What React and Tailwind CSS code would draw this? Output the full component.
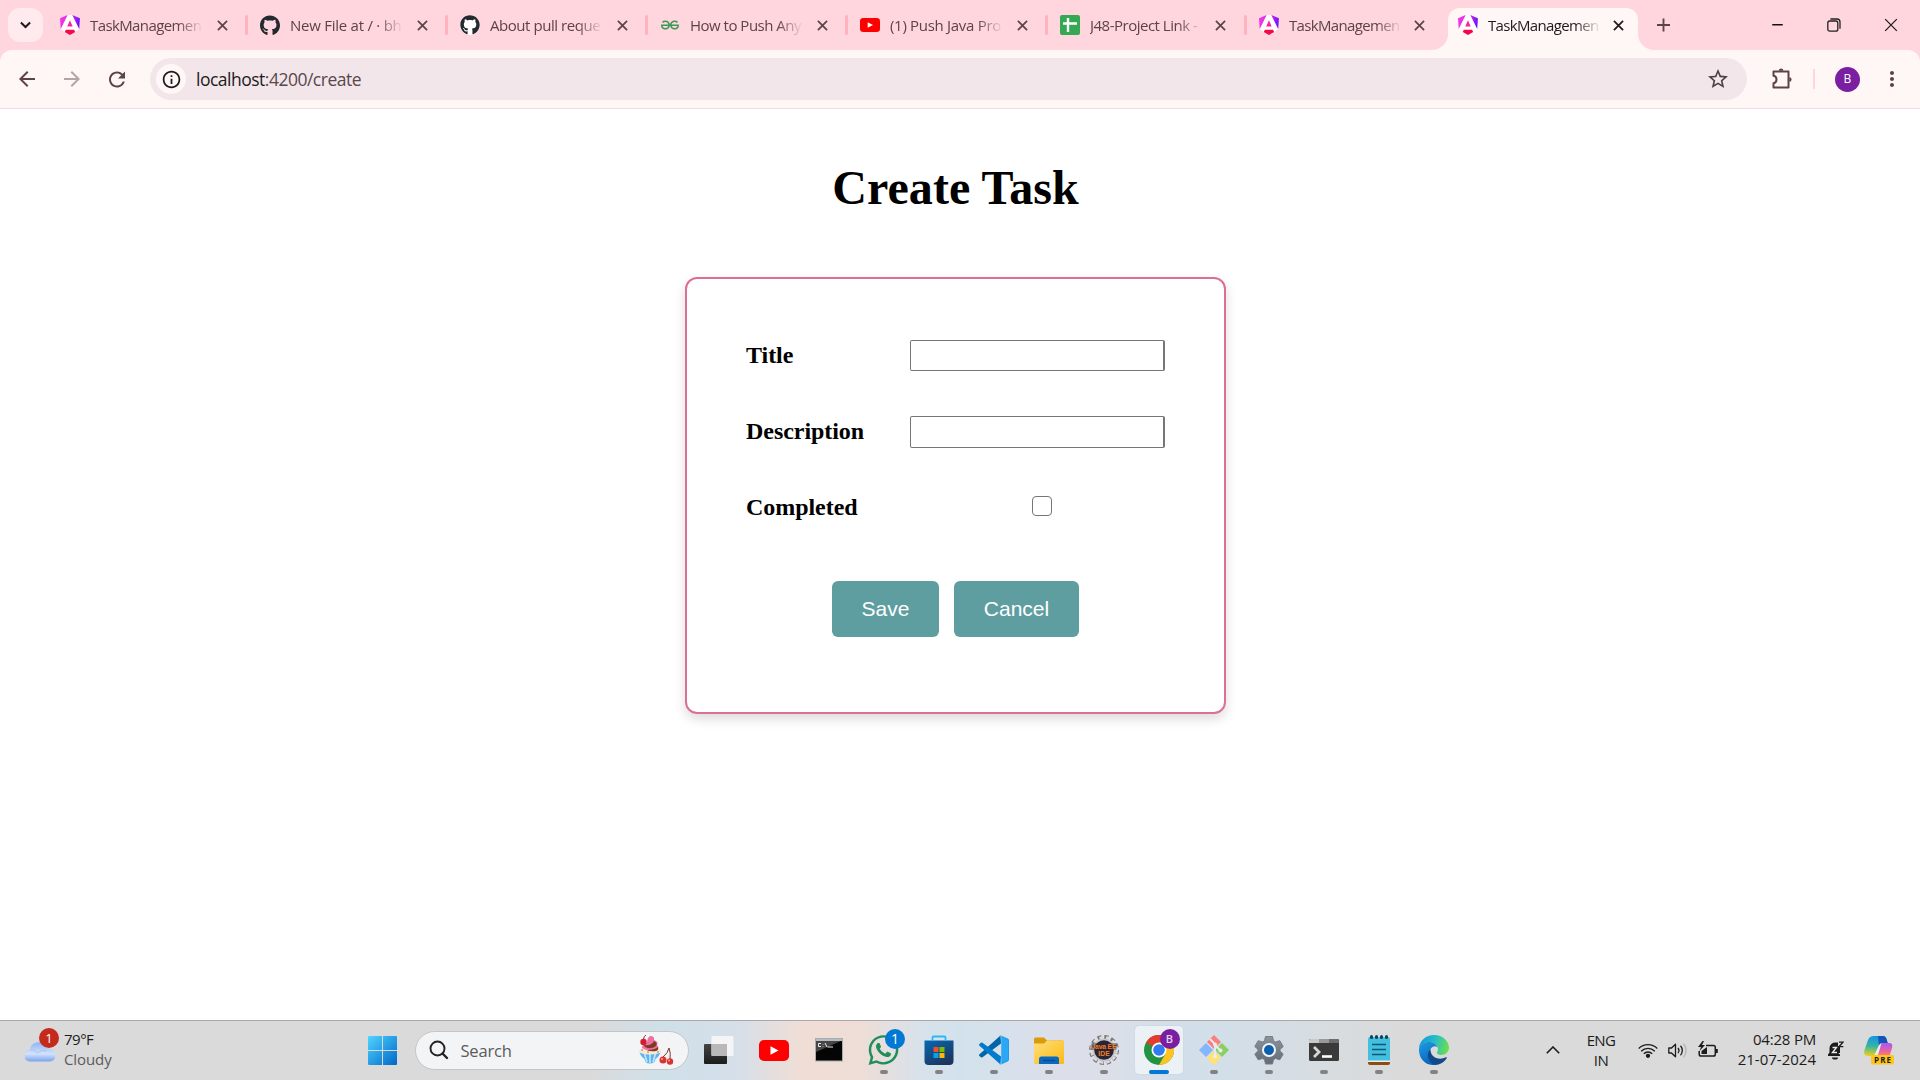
import React from "react";
import { MdArrowBack, MdArrowForward, MdRefresh, MdStarBorder, MdInfoOutline, MdMoreVert } from "react-icons/md";
import { FaGithub, FaWhatsapp } from "react-icons/fa";
import { SiGeeksforgeeks } from "react-icons/si";

function AngularIcon() {
  return (
    <svg viewBox="0 0 223 236" className="h-5 w-5" preserveAspectRatio="none">
      <defs>
        <linearGradient id="angA" x1="0" y1="0.3" x2="1" y2="0.5">
          <stop offset="0" stopColor="#f637e3" />
          <stop offset="0.5" stopColor="#d22bf0" />
          <stop offset="1" stopColor="#6c12fb" />
        </linearGradient>
        <linearGradient id="angB" x1="0" y1="0" x2="1" y2="1">
          <stop offset="0" stopColor="#fb0a3c" />
          <stop offset="1" stopColor="#e90464" />
        </linearGradient>
      </defs>
      <path fill="#fff" d="M84.690 0H137.387L214 165 168.972 202 H53.100L8 165z" />
      <path fill="url(#angA)" d="m222.077 39.192-8.019 125.923L137.387 0l84.69 39.192ZM7.937 165.115 0 39.192 84.69 0 7.937 165.115Z" />
      <path fill="#f0289f" d="M111.039 62.675l30.357 73.803H80.681l30.358-73.803Z" />
      <path fill="url(#angB)" d="m168.972 202.017-57.933 33.056-57.934-33.056 11.783-28.556h92.301l11.783 28.556Z" />
    </svg>
  );
}

function YouTubeIcon({ className }) {
  return (
    <svg viewBox="0 0 30 22" className={className} preserveAspectRatio="none">
      <rect width="30" height="22" rx="5" fill="#f00" />
      <path d="M11.5 6.5v9l8-4.5z" fill="#fff" />
    </svg>
  );
}

function SheetIcon() {
  return (
    <svg viewBox="0 0 20 20" className="h-5 w-5">
      <rect width="20" height="20" rx="2" fill="#34a853" />
      <path d="M8 3v14M3 8.5h14" stroke="#fff" strokeWidth="2.4" />
    </svg>
  );
}

function Cross({ className, width = 1.9 }) {
  return (
    <svg viewBox="0 0 12 12" className={className} fill="none" stroke="currentColor" strokeWidth={width}>
      <path d="M1 1l10 10M11 1L1 11" />
    </svg>
  );
}

const tabs = [
  { title: "TaskManagemen", icon: <AngularIcon />, tracking: "tracking-[-0.600px]" },
  { title: "New File at / · bh", icon: <FaGithub className="h-[21px] w-5 text-[#24292f]" />, tracking: "tracking-[-0.250px]" },
  {
    title: "About pull reque",
    tracking: "tracking-[-0.450px]",
    icon: (
      <span className="flex h-5 w-5 items-center justify-center rounded-full bg-white">
        <FaGithub className="h-5 w-5 text-[#24292f]" />
      </span>
    ),
  },
  { title: "How to Push Any", icon: <SiGeeksforgeeks className="h-[18px] w-[18px] text-[#3c9a55]" />, tracking: "tracking-[-0.500px]" },
  { title: "(1) Push Java Pro", icon: <YouTubeIcon className="h-[14px] w-5" />, tracking: "tracking-[-0.300px]" },
  { title: "J48-Project Link -", icon: <SheetIcon />, narrow: true, tracking: "tracking-[-0.500px]" },
  { title: "TaskManagemen", icon: <AngularIcon />, narrow: true, tracking: "tracking-[-0.650px]" },
  { title: "TaskManagemen", icon: <AngularIcon />, active: true, tracking: "tracking-[-0.650px]" },
];

function Tab({ tab, divider }) {
  return (
    <div
      className={
        tab.active
          ? "relative flex h-[42px] w-[190px] shrink-0 items-center rounded-t-xl bg-[#fff7f5] pb-2 pl-2.5 text-[#1f1a1b]"
          : tab.narrow
            ? "flex h-[42px] w-[199px] shrink-0 items-center pb-2 pl-2.5 text-[#5c4347]"
            : "flex h-[42px] w-[200px] shrink-0 items-center pb-2 pl-2.5 text-[#5c4347]"
      }
    >
      {tab.active && (
        <>
          <svg className="absolute -left-4 bottom-0 h-4 w-4" viewBox="0 0 16 16">
            <path d="M16 0v16H0A16 16 0 0 0 16 0z" fill="#fff7f5" />
          </svg>
          <svg className="absolute -right-4 bottom-0 h-4 w-4" viewBox="0 0 16 16">
            <path d="M0 0v16h16A16 16 0 0 1 0 0z" fill="#fff7f5" />
          </svg>
        </>
      )}
      <span className="flex w-5 shrink-0 justify-center">{tab.icon}</span>
      <span
        className={
          "ml-2.5 w-[112px] shrink-0 overflow-hidden whitespace-nowrap text-[15px] leading-5 [mask-image:linear-gradient(to_right,black_78%,transparent_101%)] " +
          tab.tracking
        }
      >
        {tab.title}
      </span>
      <Cross className={tab.active || tab.narrow ? "ml-[13px] h-[11px] w-[11px] shrink-0" : "ml-[14.500px] h-[11px] w-[11px] shrink-0"} />
      {divider && <span className="ml-auto mr-0.5 h-5 w-[3px] rounded-full bg-[#ffb3c0]" />}
    </div>
  );
}

function BrowserChrome() {
  return (
    <header className="bg-[#ffd6de] font-['Open_Sans','Noto_Sans',sans-serif]">
      <div className="flex h-[50px] items-start pt-2">
        <button className="ml-2 mr-[7px] flex h-[34px] w-[35px] shrink-0 items-center justify-center rounded-xl bg-[#ffebee]">
          <svg viewBox="0 0 12 8" className="h-2 w-[11px]" fill="none" stroke="#1f1a1b" strokeWidth="2.2">
            <path d="M1 1.2l5 5 5-5" />
          </svg>
        </button>
        {tabs.map((t, i) => (
          <Tab key={i} tab={t} divider={i < 6} />
        ))}
        <svg viewBox="0 0 14 14" className="ml-[19px] mt-2.5 h-[14px] w-[13px] shrink-0" stroke="#5c4347" strokeWidth="2">
          <path d="M7 0v14M0 7h14" />
        </svg>
        <div className="ml-auto mr-[22px] flex h-[34px] items-center text-[#1f1a1b]">
          <svg viewBox="0 0 14 2" className="h-[1.5px] w-[13px]">
            <rect width="14" height="2" fill="#111" />
          </svg>
          <svg viewBox="0 0 14 14" className="ml-[43px] h-[14px] w-[14px]" fill="none" stroke="#222" strokeWidth="1.3">
            <rect x="0.8" y="3" width="10" height="10.2" rx="2" />
            <path d="M3.4 1h6.6a3 3 0 0 1 3 3v6.8" />
          </svg>
          <Cross className="ml-[43px] h-[14px] w-[14px]" width={1.1} />
        </div>
      </div>
      <div className="flex h-[58px] items-center rounded-t-xl bg-[#fff7f5] text-[#5c4347]">
        <MdArrowBack className="ml-[15px] h-6 w-6 text-[#5c4347]" />
        <MdArrowForward className="ml-[21px] h-6 w-6 text-[#b3a5a6]" />
        <MdRefresh className="ml-[21px] h-[25px] w-6" />
        <div className="ml-[21px] flex h-[42px] w-[1597px] items-center rounded-full bg-[#f2e6ea] pl-[6px]">
          <span className="flex h-[30px] w-[30px] items-center justify-center rounded-full bg-[#fff7f5]">
            <MdInfoOutline className="h-[21px] w-[21px] text-[#1f1a1b]" />
          </span>
          <span className="ml-2.5 text-[17.500px] tracking-[-0.500px] text-[#5a474b]">
            <span className="text-[#1f1a1b]">localhost</span>:4200/create
          </span>
          <MdStarBorder className="ml-auto mr-[17px] h-6 w-6 text-[#4f3e41]" />
        </div>
        <svg viewBox="0 0 24 24" className="ml-[23px] h-6 w-6" fill="none" stroke="#5c4347" strokeWidth="2">
          <path d="M3.500 4.500H18.500V20.500H3.500V16.200C7.500 15.500 7.500 9.500 3.500 8.800z" strokeLinejoin="round" />
          <path d="M8.800 3.800a2.300 2.300 0 0 1 4.600 0zM19.300 10.200a2.300 2.300 0 0 1 0 4.600z" fill="#5c4347" stroke="none" />
        </svg>
        <span className="ml-[19px] h-5 w-0.5 bg-[#ffd6de]" />
        <span className="ml-5 flex h-[25px] w-[25px] items-center justify-center rounded-full bg-[#7b1fa2] text-[12px] text-white">B</span>
        <MdMoreVert className="ml-5 h-6 w-6" />
      </div>
    </header>
  );
}

function Field({ label, children }) {
  return (
    <div className="flex h-[76px] items-start">
      <label className="w-[164px] pt-px text-[24px] font-bold leading-7 tracking-[-0.050px]">{label}</label>
      {children}
    </div>
  );
}

function CreateTask() {
  return (
    <main className="flex flex-1 flex-col items-center border-t border-[#f3dade] bg-white pr-[9px] font-['Liberation_Serif',serif] text-black">
      <h1 className="mt-[51px] text-[48px] font-bold leading-[56px] tracking-[0.050px]">Create Task</h1>
      <form className="mt-[61px] h-[437px] w-[541px] rounded-xl border-[2.500px] border-[#db7093] px-[59px] pt-[61px] shadow-[0_5px_12px_rgba(0,0,0,0.14)]">
        <Field label="Title">
          <input className="h-[31px] w-[255px] shrink-0 rounded-[2px] border border-r-2 border-[#767676] bg-white" />
        </Field>
        <Field label="Description">
          <input className="h-8 w-[255px] shrink-0 rounded-[2px] border border-r-2 border-[#767676] bg-white" />
        </Field>
        <Field label="Completed">
          <input
            type="checkbox"
            className="ml-[122px] mt-[4px] h-5 w-5 appearance-none rounded-[4px] border-[1.500px] border-[#767676] bg-white"
          />
        </Field>
        <div className="mt-[13px] flex justify-center gap-[15px] font-['Liberation_Sans',sans-serif] text-[21px] text-white">
          <button type="button" className="h-14 w-[107px] rounded-md bg-[#5f9ea0]">Save</button>
          <button type="button" className="h-14 w-[125px] rounded-md bg-[#5f9ea0]">Cancel</button>
        </div>
      </form>
    </main>
  );
}

const WindowsIcon = () => (
  <svg viewBox="0 0 29 29" className="h-[29px] w-[29px]">
    <defs>
      <linearGradient id="win" x1="0" y1="0" x2="29" y2="29" gradientUnits="userSpaceOnUse">
        <stop offset="0" stopColor="#4fd5ff" />
        <stop offset="1" stopColor="#0067c8" />
      </linearGradient>
    </defs>
    <path fill="url(#win)" d="M1 0h13v14H0V1a1 1 0 0 1 1-1zM15 0h13a1 1 0 0 1 1 1v13H15zM0 15h14v14H1a1 1 0 0 1-1-1zM15 15h14v13a1 1 0 0 1-1 1H15z" />
  </svg>
);

const SundaeIcon = () => (
  <svg viewBox="0 0 36 30" className="h-[30px] w-9">
    <path d="M1.500 15q0 6 5 9l1 3q4 3 9 0l1-3q5-3 5-9z" fill="#5fb4ee" />
    <path d="M6 17l3 10M12 17v11M18 17l-3 10" stroke="#c3e7fd" strokeWidth="1.600" />
    <ellipse cx="12" cy="16" rx="11.500" ry="3.600" fill="#f8ead0" />
    <path d="M3 15h2M9 17h2M14 15.500h2M19 17h2" stroke="#d95c77" strokeWidth="1" />
    <path d="M4 13q0-4 5-5 0-5 3-7 5 0 4 4 5 2 3 5 3 3-1 5-8 2-14-2z" fill="#ef6fa2" />
    <path d="M6 10q8 1 10-4 4 2 2 5-5 4-11 1zM9 15q8 0 11-3 1 3-2 4-5 1-9-1z" fill="#7b3b23" />
    <circle cx="5.500" cy="7" r="3.200" fill="#d41e2f" />
    <path d="M5.500 4Q6 1 8 0M25 22q5-4 6-9 2 5 1 11" stroke="#7a3a28" fill="none" />
    <circle cx="25" cy="25" r="3.500" fill="#d9352f" />
    <circle cx="32" cy="26.500" r="3.200" fill="#d9352f" />
    <circle cx="24" cy="24" r="1" fill="#ff9a8c" />
    <circle cx="31" cy="25.500" r="1" fill="#ff9a8c" />
  </svg>
);

const TaskViewIcon = () => (
  <svg viewBox="0 0 30 29" className="h-[29px] w-[30px]">
    <defs>
      <linearGradient id="tv" x1="0" y1="0" x2="0" y2="1"><stop stopColor="#444" /><stop offset="1" stopColor="#1c1c1c" /></linearGradient>
    </defs>
    <rect y="8" width="23" height="20" rx="1" fill="url(#tv)" />
    <rect x="7.500" width="22" height="20" rx="1" fill="#f5f5f5" />
    <path d="M7.500 8H23v12H8.500a1 1 0 0 1-1-1z" fill="#b9b9b9" />
  </svg>
);

const CmdIcon = () => (
  <svg viewBox="0 0 28 24" className="h-6 w-7">
    <rect x="0.500" y="0.500" width="27" height="22.500" fill="#050505" stroke="#a8abb0" />
    <path d="M1 1h26v2H1z" fill="#b6bcc4" />
    <path d="M1 3h25L1 14z" fill="#454545" />
    <path d="M6 5.500H3.500v3H6M8 6v.5M8 8v.5M10 5l2 4M12.500 9H18" stroke="#eee" strokeWidth="1" fill="none" />
  </svg>
);

const StoreIcon = () => (
  <svg viewBox="0 0 30 30" className="h-[30px] w-[30px]">
    <defs>
      <linearGradient id="store" x1="0" y1="0" x2="0.600" y2="1"><stop stopColor="#0768b4" /><stop offset="1" stopColor="#1c365f" /></linearGradient>
    </defs>
    <path d="M.5 5.500h29V26a4 4 0 0 1-4 4h-21a4 4 0 0 1-4-4z" fill="url(#store)" />
    <path d="M8.500 6V2.500a1 1 0 0 1 1-1h11a1 1 0 0 1 1 1V6" fill="none" stroke="#29b9f2" strokeWidth="1.800" />
    <path d="M9.500 12h5v5h-5z" fill="#f25022" /><path d="M15.500 12h5v5h-5z" fill="#7fba00" />
    <path d="M9.500 18h5v5h-5z" fill="#00a4ef" /><path d="M15.500 18h5v5h-5z" fill="#ffb900" />
  </svg>
);

const CodeIcon = () => (
  <svg viewBox="0 0 30 30" className="h-[30px] w-[30px]">
    <path d="M22 8.500L3.500 22.300a1.300 1.300 0 0 1-1.600 0L.5 21a1.200 1.200 0 0 1 0-1.800L21.500.5z" fill="#0065a9" />
    <path d="M22 21.500L3.500 7.700a1.300 1.300 0 0 0-1.600 0L.5 9a1.200 1.200 0 0 0 0 1.800l21 18.700z" fill="#007acc" />
    <path d="M21.500 29.800a1.900 1.900 0 0 1-1.400-.5c1 .8 2.400.2 2.400-1.200V1.900c0-1.300-1.500-2-2.400-1.100.4-.5 1-.6 1.600-.4l7 3.200c.8.4 1.300 1 1.300 1.900v19c0 .8-.5 1.600-1.300 1.900z" fill="#1f9cf0" />
    <path d="M22.500 2v26l6.500-3V5z" fill="#2aa7f5" />
  </svg>
);

const FolderIcon = () => (
  <svg viewBox="0 0 30 27" className="h-[27px] w-[30px]">
    <defs>
      <linearGradient id="fold" x1="0" y1="0" x2="1" y2="1"><stop stopColor="#ffe07a" /><stop offset="1" stopColor="#fbb914" /></linearGradient>
    </defs>
    <path d="M0 2a1.500 1.500 0 0 1 1.500-1.500h8.500l3 3h15.500A1.500 1.500 0 0 1 30 5v8H0z" fill="#dc9a0b" />
    <path d="M0 6.500h10l3-3h15.500A1.500 1.500 0 0 1 30 5v21a1 1 0 0 1-1 1H1a1 1 0 0 1-1-1z" fill="url(#fold)" />
    <path d="M5 27v-5a2.500 2.500 0 0 1 2.500-2.500h15A2.500 2.500 0 0 1 25 22v5z" fill="#0c68c0" />
    <path d="M9 23.500h12" stroke="#0a4f93" strokeWidth="1.500" />
  </svg>
);

const JavaIcon = () => (
  <svg viewBox="0 0 30 30" className="h-[30px] w-[30px]">
    <circle cx="15" cy="15" r="13" fill="none" stroke="#74777b" strokeWidth="4" strokeDasharray="4 2.800" />
    <circle cx="15" cy="15" r="12.600" fill="none" stroke="#dcdcdc" strokeWidth="2.600" strokeDasharray="3.600 3.200" />
    <circle cx="15" cy="15" r="11.500" fill="#c9c9c9" />
    <circle cx="15" cy="15" r="9.800" fill="#2b2438" />
    <path d="M2.500 8.500h25v6h-25z" fill="#2b2438" opacity="0.700" />
    <g fill="#f08020" fontFamily="Liberation Sans" fontSize="6.800" fontWeight="bold" textAnchor="middle">
      <text x="15" y="14" textLength="25">Java EE</text>
      <text x="15" y="20.500">IDE</text>
    </g>
  </svg>
);

const ChromeIcon = () => (
  <svg viewBox="0 0 30 30" className="h-[30px] w-[30px]">
    <circle cx="15" cy="15" r="15" fill="#229342" />
    <path d="M15 15L2 7.500A15 15 0 0 1 28 7.500H15z" fill="#e33b2e" />
    <path d="M21.500 18.800L15 30a15 15 0 0 0 13-22.500H15z" fill="#fdc31e" />
    <circle cx="15" cy="15" r="7.500" fill="#fff" />
    <circle cx="15" cy="15" r="5.800" fill="#2f7cf0" />
  </svg>
);

const GitIcon = () => (
  <svg viewBox="0 0 30 30" className="h-[30px] w-[30px]">
    <path d="M15 0l7 7-7 7-7-7z" fill="#f98080" />
    <path d="M23 8l7 7-7 7-7-7z" fill="#8bd05f" />
    <path d="M7 8l7 7-7 7-7-7z" fill="#84b5ff" />
    <path d="M15 16l7 7-7 7-7-7z" fill="#ffe26f" />
    <path d="M11 4l5 5v13M16 10l6 6" fill="none" stroke="#e8edf0" strokeWidth="1.800" />
    <circle cx="16" cy="9.500" r="2" fill="#e8edf0" /><circle cx="21.500" cy="15.500" r="2" fill="#e8edf0" /><circle cx="16" cy="21.500" r="2" fill="#e8edf0" />
  </svg>
);

const SettingsIcon = () => (
  <svg viewBox="0 0 30 30" className="h-[30px] w-[30px]">
    <defs>
      <linearGradient id="gear" x1="0" y1="0" x2="0" y2="1"><stop stopColor="#8b949c" /><stop offset="1" stopColor="#626b74" /></linearGradient>
    </defs>
    <g fill="url(#gear)" stroke="#757e87" strokeLinejoin="round" strokeWidth="1">
      <path d="M11.500 1.500h7l1 4.300 2 1.200 4.300-1.300 3.400 5.800-3.200 3v1.500l3.200 3-3.400 5.800-4.300-1.300-2 1.200-1 4.300h-7l-1-4.300-2-1.200-4.300 1.300L.8 19l3.200-3v-1.500l-3.200-3 3.400-5.800L8.500 7l2-1.200z" />
    </g>
    <circle cx="15" cy="15" r="7" fill="#f2f5f7" />
    <circle cx="15" cy="15" r="5" fill="#0d5fae" />
  </svg>
);

const TerminalIcon = () => (
  <svg viewBox="0 0 30 22" className="h-[22px] w-[30px]">
    <rect width="30" height="22" rx="1.500" fill="#3a3a3a" />
    <path d="M1.500 0H10v4H0V1.500A1.500 1.500 0 0 1 1.500 0z" fill="#c9c9c9" />
    <path d="M10 0h10v4H10z" fill="#999" /><path d="M20 0h8.500A1.500 1.500 0 0 1 30 1.500V4H20z" fill="#6c6c6c" />
    <path d="M5 8l5 5-5 5" fill="none" stroke="#d6d6d6" strokeWidth="2.800" />
    <path d="M13 17.500h10" stroke="#fff" strokeWidth="2.600" />
  </svg>
);

const NotepadIcon = () => (
  <svg viewBox="0 0 22 30" className="h-[30px] w-[22px]">
    <path d="M0 24h22v4a2 2 0 0 1-2 2H2a2 2 0 0 1-2-2z" fill="#8e4b12" />
    <path d="M0 4a2 2 0 0 1 2-2h18a2 2 0 0 1 2 2v22H0z" fill="#43bfdf" />
    <path d="M0 25.500h22v1.500H0z" fill="#eee" />
    <path d="M4 9.500h14M4 14.500h14M4 19.500h14" stroke="#0e5774" strokeWidth="1.600" />
    <g fill="#123f57">
      <rect x="2" width="3" height="4" rx="1.500" /><rect x="7" width="3" height="4" rx="1.500" />
      <rect x="12" width="3" height="4" rx="1.500" /><rect x="17" width="3" height="4" rx="1.500" />
    </g>
  </svg>
);

const EdgeIcon = () => (
  <svg viewBox="0 0 30 30" className="h-[30px] w-[30px]">
    <defs>
      <linearGradient id="edgeTop" x1="0" y1="0.300" x2="1" y2="0.500">
        <stop stopColor="#1596dc" /><stop offset="0.500" stopColor="#24bdc9" /><stop offset="1" stopColor="#6be04a" />
      </linearGradient>
      <linearGradient id="edgeLeft" x1="0" y1="0" x2="0.500" y2="1"><stop stopColor="#1ba0e3" /><stop offset="1" stopColor="#0c61bd" /></linearGradient>
    </defs>
    <path d="M0 14C0 6 7 0 15 0c9 0 15 6.500 15 12.500 0 4.500-3.500 7.500-7.500 7.500-3.500 0-4.500-1.500-4.500-2.500 0-.8 1-1.500 1-3.500C19 9 13.500 7 10 7 5 7 1 10 0 14z" fill="url(#edgeTop)" />
    <path d="M0 15C0 9.500 5 7 10 7c4.500 0 8 2.500 8.700 5.500C17 11 15 11 13.500 12 9 15 9 22 13 26c1.500 2 4 3 5 3.500C9 32 0 25.500 0 15z" fill="url(#edgeLeft)" />
    <path d="M11.500 14c-5 5-2.500 13 4.500 16 5 0 9.500-3 11.800-7 .3-.7-.2-1-.8-.7C19.500 26 11 22 11.500 14z" fill="#114a8b" />
  </svg>
);

const WhatsAppIcon = () => (
  <span className="relative flex">
    <FaWhatsapp className="h-[34px] w-[33px] text-[#1f8e58]" />
    <span className="absolute -right-[5px] -top-[4px] flex h-5 w-5 items-center justify-center rounded-full bg-[#0078d4] text-[14px] leading-5 text-white">1</span>
  </span>
);

const BadgedChrome = () => (
  <span className="relative flex">
    <ChromeIcon />
    <span className="absolute -right-[6px] -top-[6px] flex h-5 w-5 items-center justify-center rounded-full bg-[#7b1fa2] text-[11px] font-semibold text-white/80">B</span>
  </span>
);

const apps = [
  { icon: <YouTubeIcon className="h-[21px] w-[30px]" /> },
  { icon: <CmdIcon /> },
  { icon: <WhatsAppIcon />, running: true },
  { icon: <StoreIcon />, running: true },
  { icon: <CodeIcon />, running: true },
  { icon: <FolderIcon />, running: true },
  { icon: <JavaIcon />, running: true },
  { icon: <BadgedChrome />, active: true },
  { icon: <GitIcon />, running: true },
  { icon: <SettingsIcon />, running: true },
  { icon: <TerminalIcon />, running: true },
  { icon: <NotepadIcon />, running: true },
  { icon: <EdgeIcon />, running: true },
];

function TaskbarApp({ app }) {
  return (
    <div
      className={
        app.active
          ? "relative mx-[3.500px] flex h-12 w-12 items-center justify-center rounded-[4px] bg-[#ecf1f6] shadow-[0_0_1px_rgba(0,0,0,0.2)]"
          : "relative flex h-12 w-[55px] items-center justify-center"
      }
    >
      {app.icon}
      {app.running && <span className="absolute bottom-0 left-1/2 h-1 w-2 -translate-x-1/2 rounded-full bg-[#828282]" />}
      {app.active && <span className="absolute bottom-0 left-1/2 h-1 w-5 -translate-x-1/2 rounded-full bg-[#0078d4]" />}
    </div>
  );
}

function Taskbar() {
  return (
    <footer className="flex h-[60px] items-center border-t border-[#a9a9ab] bg-[linear-gradient(90deg,#dadada_0px,#dadada_590px,#cfe0e9_660px,#d5dfea_735px,#f0ded6_800px,#eeddd6_860px,#d6e2ec_925px,#d2e2ec_960px,#dcdfea_1060px,#dcdfe8_1110px,#d2dfea_1170px,#d3dfe8_1230px,#dadada_1400px)] pb-px font-['Open_Sans','Noto_Sans',sans-serif] text-[#1c1c1c]">
      <div className="flex w-[367.500px] items-center pl-[25px]">
        <span className="relative mb-[5px] flex h-[29px] w-[34px] items-end">
          <svg viewBox="0 0 30 21" className="h-[21px] w-[30px]">
            <defs>
              <linearGradient id="cloud" x1="0" y1="0" x2="0" y2="1"><stop stopColor="#8fb4f4" /><stop offset="0.600" stopColor="#d3e2fb" /><stop offset="1" stopColor="#78a2ee" /></linearGradient>
            </defs>
            <path d="M5 8.500a8 8 0 0 1 15-3 6 6 0 0 1 5 2.500 6 6 0 0 1-1 12.500H5A5.500 5.500 0 0 1 5 8.500z" fill="url(#cloud)" />
            <path d="M5 9q5-1 7 3 5-4 10-2" stroke="#a9c5f6" fill="none" />
          </svg>
          <span className="absolute right-0 -top-[5px] flex h-5 w-5 items-center justify-center rounded-full bg-[#c42b1c] text-[13px] leading-5 text-white">1</span>
        </span>
        <div className="mb-[3px] ml-[5px] text-[15px] leading-5 tracking-[-0.500px]">
          <div>79°F</div>
          <div className="tracking-[-0.100px] text-[#5c5c5c]">Cloudy</div>
        </div>
      </div>
      <WindowsIcon />
      <div className="ml-[18px] flex h-[39px] w-[274px] items-center rounded-full border border-[#c5c5c5] bg-[#f3f4f6] pl-[13px] pr-[14px]">
        <svg viewBox="0 0 20 20" className="h-5 w-5" fill="none" stroke="#222" strokeWidth="1.900">
          <circle cx="8.500" cy="8.500" r="7" /><path d="M13.500 13.500l4.500 4.500" strokeWidth="2.400" strokeLinecap="round" />
        </svg>
        <span className="ml-3 flex-1 pt-0.5 text-[16.500px] tracking-[-0.200px] text-[#5b5b5b]">Search</span>
        <SundaeIcon />
      </div>
      <span className="ml-[15px] mr-[12.500px]"><TaskViewIcon /></span>
      {apps.map((app, i) => (
        <TaskbarApp key={i} app={app} />
      ))}
      <div className="ml-auto flex items-center">
        <svg viewBox="0 0 14 8" className="h-2 w-[14px]" fill="none" stroke="#1c1c1c" strokeWidth="1.600"><path d="M.8 7.200L7 1l6.200 6.200" /></svg>
        <div className="mb-px ml-[26px] w-[30px] text-center text-[15px] leading-5 tracking-[-0.600px]">
          <div>ENG</div>
          <div>IN</div>
        </div>
        <svg viewBox="0 0 20 15" className="ml-[22px] h-[15px] w-5" fill="none" stroke="#1c1c1c" strokeWidth="1.300">
          <path d="M.7 5.500a13.200 13.200 0 0 1 18.600 0M3.200 8.200a9.600 9.600 0 0 1 13.600 0M5.800 10.700a6 6 0 0 1 8.400 0" />
          <circle cx="10" cy="12.800" r="1.500" fill="#1c1c1c" />
        </svg>
        <svg viewBox="0 0 20 15" className="ml-[10px] h-[15px] w-5" fill="none" stroke="#1c1c1c" strokeWidth="1.300">
          <path d="M.8 5h2.700L7.500 1.200v12.600L3.500 10H.8z" strokeLinejoin="round" />
          <path d="M10 5a4 4 0 0 1 0 5M12.500 2.800a7 7 0 0 1 0 9.400" />
          <path d="M15.500.8a10 10 0 0 1 0 13.400" stroke="#b5b5b5" />
        </svg>
        <svg viewBox="0 0 20 16" className="mb-0.5 ml-[10px] h-4 w-5" fill="none" stroke="#1c1c1c" strokeWidth="1.500">
          <path d="M8 4.500h7.500a1.800 1.800 0 0 1 1.800 1.800v6.900a1.800 1.800 0 0 1-1.800 1.800H3a1.800 1.800 0 0 1-1.800-1.800V10" />
          <path d="M17.500 8h2.300v4h-2.300zM3.500 13V10l5.500-4v7zM4.500 0L0 6h3L1.500 10 7 4H4L6 0z" fill="#1c1c1c" stroke="none" />
        </svg>
        <div className="mb-[3px] ml-[18px] w-[80px] whitespace-nowrap text-right text-[15px] leading-5">
          <div className="tracking-[-0.200px]">04:28 PM</div>
          <div>21-07-2024</div>
        </div>
        <svg viewBox="0 0 18 19" className="ml-[10px] h-[19px] w-[18px]">
          <path d="M2 15v-1.500l1.500-2V7.500a6 6 0 0 1 7-6h1.500V12l2 1.500V15zM6 16.500h6a3 2 0 0 1-6 0z" fill="#1c1c1c" />
          <path d="M9 5h5v7H9z" fill="#1c1c1c" />
          <path d="M6.500 6.500h4l-4 5h4.500" stroke="#e8e8e8" strokeWidth="1.400" fill="none" />
          <path d="M13 1.200h4l-4 4.500h4.300" stroke="#1c1c1c" strokeWidth="1.300" fill="none" />
        </svg>
        <svg viewBox="0 0 30 29" className="ml-[20px] mr-[26px] h-[29px] w-[30px]">
          <defs>
            <linearGradient id="cpA" x1="0.300" y1="0" x2="0.200" y2="1"><stop stopColor="#1594e6" /><stop offset="0.500" stopColor="#35b5a0" /><stop offset="1" stopColor="#f0d11e" /></linearGradient>
            <linearGradient id="cpB" x1="0.500" y1="0" x2="0.500" y2="1"><stop stopColor="#a35bf2" /><stop offset="0.600" stopColor="#e661a8" /><stop offset="1" stopColor="#fb8850" /></linearGradient>
          </defs>
          <path d="M10 0h9q2.500 0 3.500 3l1.200 4H18q-2 0-3 3l-2 7q-1 3-4 3H4q-5 0-3.500-6L4 4q1.500-4 6-4z" fill="url(#cpA)" />
          <path d="M14 0h5q2.500 0 3.500 3l1.200 4H18q-2 0-3 3z" fill="#1653b8" />
          <path d="M18 7h7q4.500 0 3 5l-2.500 8H10q3-1 4-4l2-7q.5-2 2-2z" fill="url(#cpB)" />
          <path d="M15 9l2.500-2L14 19l-4 1z" fill="#eee" />
          <rect x="7" y="19" width="23" height="9.500" rx="2" fill="#ffc61a" />
          <text x="18.500" y="26.700" fontSize="8" fontWeight="bold" fontFamily="Open Sans" textAnchor="middle" textLength="17" fill="#222">PRE</text>
        </svg>
      </div>
    </footer>
  );
}

export default function App() {
  return (
    <div className="flex h-[1080px] w-[1920px] flex-col overflow-hidden bg-white">
      <BrowserChrome />
      <CreateTask />
      <Taskbar />
    </div>
  );
}
